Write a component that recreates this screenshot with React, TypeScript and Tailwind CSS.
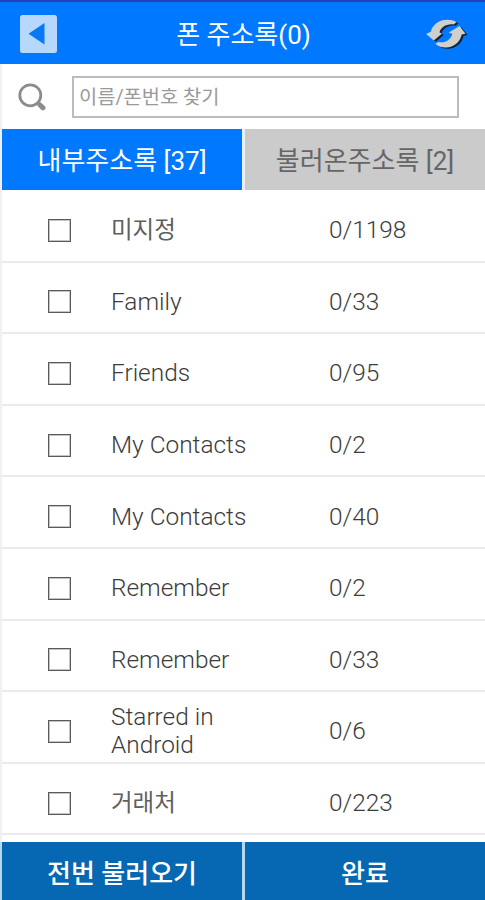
import React, { useState } from 'react';

const groups = [
  { name: '미지정', count: '0/1198', korean: true },
  { name: 'Family', count: '0/33' },
  { name: 'Friends', count: '0/95' },
  { name: 'My Contacts', count: '0/2' },
  { name: 'My Contacts', count: '0/40' },
  { name: 'Remember', count: '0/2' },
  { name: 'Remember', count: '0/33' },
  { name: 'Starred in Android', count: '0/6' },
  { name: '거래처', count: '0/223', korean: true },
];

const BackIcon = () => (
  <svg width="37" height="38" viewBox="0 0 37 38">
    <rect width="37" height="38" rx="2.5" fill="#b5d8fc" />
    <path d="M8.5 18.8 24.5 8v21.5z" fill="#0878f5" />
  </svg>
);

const SearchIcon = () => (
  <svg width="28" height="28" viewBox="0 0 28 28" fill="none" stroke="#8c8c8c">
    <circle cx="12.3" cy="12.3" r="10.5" strokeWidth="2.8" />
    <path d="m20 20 1.5 1.5" strokeWidth="3" />
    <path d="m22 22 3 2.8" strokeWidth="5" strokeLinecap="round" />
  </svg>
);

const RefreshShape = () => (
  <>
    <path d="M0 15 4.8 12.8C6.5 5.2 14 .6 21.5.8c3.6 0 6.5.8 9 2.4l-3 2.3C20.5 4.6 15 8.5 13.5 13.2L15.8 14.8 7.8 21.5z" />
    <path d="M39.5 14.7 33.5 7 22.8 13.5l3.5 1.5C24.5 21 19.5 24.3 12.5 23L9.3 24.8C12.5 27.7 16 28.6 20 28.5c8 0 14-5.500 15.700-13z" />
  </>
);

const RefreshIcon = () => (
  <svg width="43" height="32" viewBox="0 0 43 32">
    <g fill="#15243a" transform="translate(2 1.2)"><RefreshShape /></g>
    <g fill="#cfcfcc"><RefreshShape /></g>
  </svg>
);

export default function App() {
  const [checked, setChecked] = useState<number[]>([]);

  const toggle = (i: number) => {
    setChecked(checked.includes(i) ? checked.filter((c) => c !== i) : [...checked, i]);
  };

  return (
    <div className="w-[485px] h-[900px] flex flex-col overflow-hidden bg-white font-['Roboto','Noto_Sans_CJK_KR',sans-serif]">
      <header className="h-16 shrink-0 border-t-2 border-[#2640b4] bg-[#0078ff] flex items-center justify-between pl-5 pr-4 pt-1">
        <button type="button" className="-mt-0.5"><BackIcon /></button>
        <h1 className="text-white text-[26px] leading-8 pl-1">폰 주소록(0)</h1>
        <button type="button"><RefreshIcon /></button>
      </header>

      <div className="h-[65px] shrink-0 flex items-center pl-4 pr-[26px] border-l-2 border-[#f1f1f1]">
        <SearchIcon />
        <input
          type="text"
          placeholder="이름/폰번호 찾기"
          className="ml-[26px] h-[42px] w-[387px] border-2 border-[#bcbcbc] px-[5px] pt-0.5 text-[19.8px] outline-none placeholder:text-[#9a9a9a]"
        />
      </div>

      {/* Tabs */}
      <div className="h-[61px] shrink-0 flex gap-[3px] pl-0.5 bg-[#eaf1f5] text-[26px] leading-8">
        <button type="button" className="w-60 bg-[#0078ff] text-white pt-0.5">내부주소록 [37]</button>
        <button type="button" className="w-60 bg-[#cbcbcb] text-[#666666] pt-0.5">불러온주소록 [2]</button>
      </div>

      <ul className="h-[652px] flex-1 overflow-hidden border-l-2 border-[#f1f1f1] pt-px text-[24.4px] leading-7 font-light text-[#3c3c3c]">
        {groups.map((group, i) => (
          <li key={i} className="h-[71.6px] flex items-center pl-[46px] pt-[9px] border-b-2 border-[#ebebeb]">
            <button
              type="button"
              onClick={() => toggle(i)}
              className={`size-[23px] shrink-0 border-[1.5px] outline-1 -outline-offset-2 outline-[#c4c4c4] border-[#5a5a5a] ${checked.includes(i) ? 'bg-[#0078ff]' : 'bg-white'}`}
            />
            <span className={`ml-10 w-[180px] pr-8 shrink-0 ${group.korean ? 'text-[23.5px] font-normal text-[#5f5f5f]' : ''}`}>{group.name}</span>
            <span className="ml-[38px]">{group.count}</span>
          </li>
        ))}
      </ul>

      <footer className="h-[58px] shrink-0 flex gap-[3px] pl-0.5 bg-[#b7d7ec] text-white text-[26px] leading-8 font-medium">
        <button type="button" className="w-60 bg-[#0668b3] pt-1.5">전번 불러오기</button>
        <button type="button" className="w-60 bg-[#0668b3] pt-1.5">완료</button>
      </footer>
    </div>
  );
}
